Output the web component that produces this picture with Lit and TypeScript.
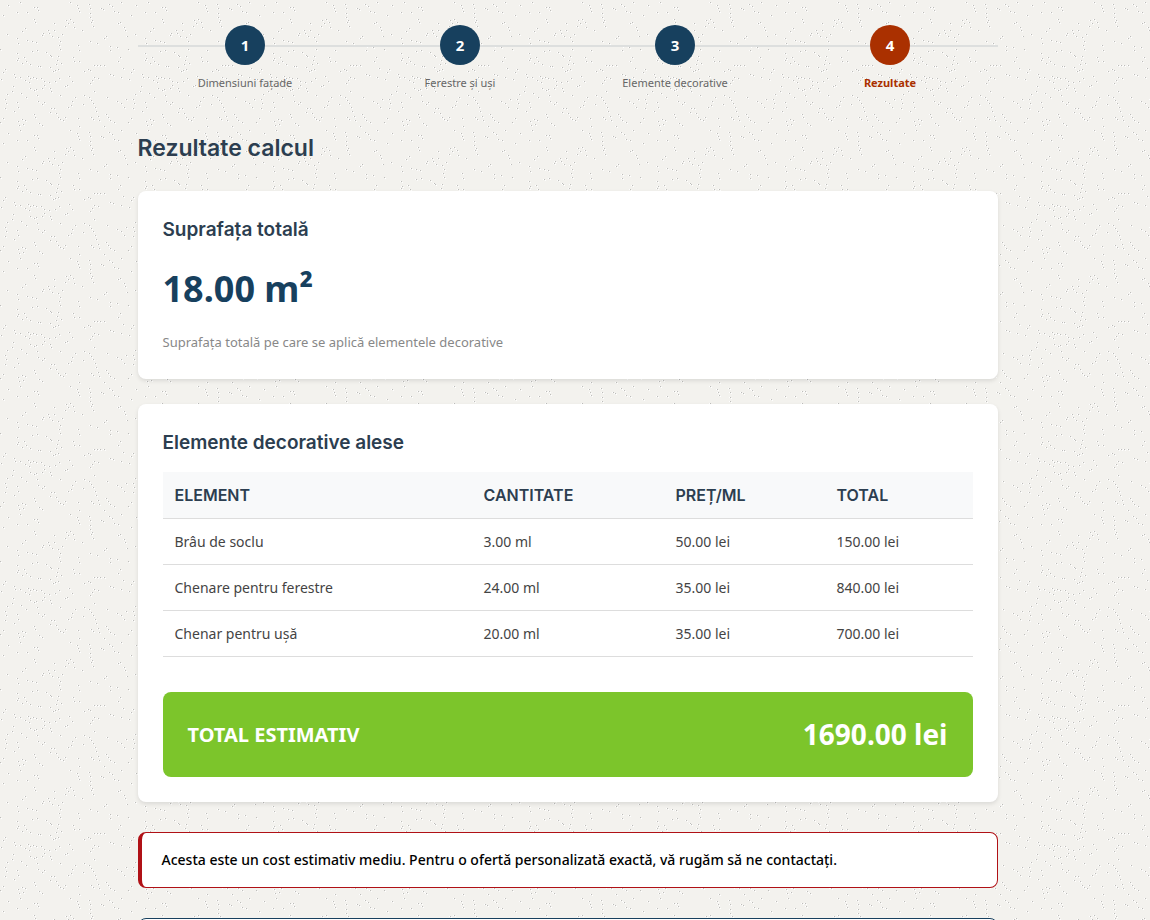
import { LitElement, html, css, unsafeCSS } from "lit";
import { customElement, property } from "lit/decorators.js";
import { classMap } from "lit/directives/class-map.js";

/* Speckles of one 128px paper tile, as x,y pairs. */
const SPECKLES =
  "20,2 70,2 77,5 78,8 79,11 89,4 90,8 101,8 103,9 109,4 112,6 114,11 118,12 121,2 34,7 37,7 38,10 27,12 17,12 8,5 3,15 90,13 90,17 91,22 93,26 92,20 " +
  "34,19 35,22 66,20 70,19 68,23 73,22 74,27 65,26 82,30 54,23 54,30 48,30 49,33 43,33 42,35 52,36 58,37 60,41 59,45 60,49 62,34 22,31 25,28 7,34 118,23 120,22 " +
  "124,27 125,30 127,36 104,38 106,36 110,46 110,50 117,47 17,38 18,43 27,40 32,51 32,41 36,42 37,50 0,49 17,53 18,58 46,52 50,55 51,56 78,45 79,50 90,41 97,43 " +
  "73,57 74,61 79,61 58,56 57,60 56,64 58,69 55,70 61,63 17,60 22,63 24,57 26,61 30,64 38,66 40,66 50,67 53,71 94,65 97,65 100,65 104,65 88,69 90,70 84,71 118,61 " +
  "123,68 120,57 5,69 3,72 14,74 15,77 20,77 25,80 28,76 30,78 33,77 36,78 41,78 44,81 29,82 30,88 34,90 36,89 42,88 44,85 49,82 50,88 51,91 55,81 59,78 69,76 72,81 " +
  "92,80 90,83 94,77 98,78 94,91 110,74 113,75 121,77 65,86 67,85 13,86 1,79 12,91 7,94 21,93 26,97 37,95 5,99 6,103 5,108 17,102 18,107 14,111 38,101 42,104 44,102 " +
  "60,95 75,97 72,101 71,105 68,107 84,95 89,97 91,100 83,104 93,103 95,107 96,111 98,116 107,97 117,101 121,103 124,107 126,99 51,108 54,108 56,113 58,117 60,119 63,120 " +
  "65,117 50,112 34,114 35,117 25,120 22,119 18,121 19,125 23,124 42,125 78,118 79,126 91,117 93,119 106,114 108,117 110,120 114,122 3,118 0,122 39,123 99,120 104,126";

const speckleTile = () => {
  const dots = SPECKLES.split(" ").map((p) => p.split(",").map(Number));
  const squares = (dx: number, dy: number) =>
    dots.map(([x, y]) => `M${x + dx} ${y + dy}h1v1h-1z`).join("");
  const svg =
    `<svg xmlns='http://www.w3.org/2000/svg' width='128' height='128' shape-rendering='crispEdges'>` +
    `<path fill='#ffffff' d='${squares(1, 1)}${squares(-1, 0)}'/>` +
    `<path fill='#bdbdbb' d='${squares(0, 0)}'/></svg>`;
  return `url("data:image/svg+xml,${encodeURIComponent(svg).replace(/'/g, "%27")}")`;
};

@customElement("step-list")
class StepList extends LitElement {
  @property({ type: Array }) steps: string[] = [];
  @property({ type: Number }) current = 0;

  static styles = css`
    :host {
      display: block;
    }
    .steps {
      display: grid;
      grid-auto-flow: column;
      grid-auto-columns: 1fr;
      margin: 0;
      padding: 0;
      list-style: none;
      background: linear-gradient(#dddfde, #dddfde) 0 20px / 100% 2px no-repeat;
    }
    .step {
      display: flex;
      flex-direction: column;
      align-items: center;
      gap: 8px;
      color: #666;
      font-size: 11px;
      line-height: 20px;
    }
    .number {
      display: grid;
      place-items: center;
      width: 40px;
      height: 40px;
      border-radius: 50%;
      background: #17405e;
      color: #fff;
      font-size: 15px;
      font-weight: 700;
    }
    .active {
      color: #aa3000;
      font-weight: 700;
    }
    .active .number {
      background: #aa3000;
    }
  `;

  render() {
    return html`<ol class="steps">
      ${this.steps.map(
        (label, i) => html`<li class=${classMap({ step: true, active: i === this.current })}>
          <span class="number">${i + 1}</span><span>${label}</span>
        </li>`
      )}
    </ol>`;
  }
}

@customElement("app-root")
class AppRoot extends LitElement {
  static styles = css`
    :host {
      display: block;
      box-sizing: border-box;
      height: 100vh;
      overflow-y: auto;
      scrollbar-width: none;
      padding-right: 15px;
      background: #f3f2ee ${unsafeCSS(speckleTile())};
      color: #444;
      font-family: "Noto Sans", "Open Sans", sans-serif;
      font-size: 14px;
      line-height: 22px;
    }
    .page {
      box-sizing: border-box;
      max-width: 900px;
      margin: 0 auto;
      padding: 25px 20px;
    }
    h2,
    h3,
    th {
      color: #2c3e50;
      font-family: Inter, "Liberation Sans", sans-serif;
      font-weight: 600;
    }
    h2 {
      margin: 40px 0 28px;
      font-size: 23px;
      line-height: 30px;
    }
    h3 {
      margin: 0;
      font-size: 19px;
      line-height: 28px;
    }
    .card {
      margin-bottom: 25px;
      padding: 25px;
      border-radius: 8px;
      background: #fff;
      box-shadow: 0 2px 4px rgba(0, 0, 0, 0.1);
    }
    .area {
      margin: 16px 0 12px;
      color: #17405e;
      font-size: 36px;
      font-weight: 700;
      line-height: 58px;
    }
    .hint {
      margin: 0;
      color: #888;
      font-size: 13px;
      line-height: 24px;
    }
    table {
      width: 100%;
      margin: 15px 0 35px;
      border-collapse: separate;
      border-spacing: 0;
      table-layout: fixed;
    }
    .col-element {
      width: 309px;
    }
    .col-quantity {
      width: 192px;
    }
    .col-price {
      width: 161px;
    }
    .col-total {
      width: 148px;
    }
    th,
    td {
      padding: 12px;
      border-bottom: 1px solid #ddd;
      line-height: 21px;
      text-align: left;
    }
    th {
      background: #f8f9fa;
      font-size: 16px;
      line-height: 22px;
      text-transform: uppercase;
    }
    .total {
      display: flex;
      align-items: center;
      justify-content: space-between;
      padding: 20px 25px;
      border-radius: 8px;
      background: #7cc52b;
      color: #fff;
      font-weight: 700;
      line-height: 45px;
    }
    .total-label {
      font-size: 20px;
    }
    .total-value {
      font-size: 28px;
    }
    .notice {
      margin: 30px 0;
      padding: 16px 20px;
      border: 1px solid #b01116;
      border-left-width: 4px;
      border-radius: 8px;
      background: #fff;
      color: #000;
      font-weight: 500;
    }
    .offer {
      min-height: 60px;
      border: 1px solid #17405e;
      border-radius: 8px;
      background: #fff;
    }
  `;

  steps = ["Dimensiuni fațade", "Ferestre și uși", "Elemente decorative", "Rezultate"];

  rows = [
    ["Brâu de soclu", "3.00 ml", "50.00 lei", "150.00 lei"],
    ["Chenare pentru ferestre", "24.00 ml", "35.00 lei", "840.00 lei"],
    ["Chenar pentru ușă", "20.00 ml", "35.00 lei", "700.00 lei"],
  ];

  render() {
    return html`<main class="page">
      <step-list .steps=${this.steps} .current=${3}></step-list>
      <h2>Rezultate calcul</h2>
      <section class="card">
        <h3>Suprafața totală</h3>
        <p class="area">18.00 m²</p>
        <p class="hint">Suprafața totală pe care se aplică elementele decorative</p>
      </section>
      <section class="card">
        <h3>Elemente decorative alese</h3>
        <table>
          <colgroup>
            <col class="col-element" />
            <col class="col-quantity" />
            <col class="col-price" />
            <col class="col-total" />
          </colgroup>
          <thead>
            <tr>
              <th scope="col">Element</th>
              <th scope="col">Cantitate</th>
              <th scope="col">Preț/ml</th>
              <th scope="col">Total</th>
            </tr>
          </thead>
          <tbody>
            ${this.rows.map((row) => html`<tr>${row.map((cell) => html`<td>${cell}</td>`)}</tr>`)}
          </tbody>
        </table>
        <div class="total">
          <span class="total-label">TOTAL ESTIMATIV</span>
          <span class="total-value">1690.00 lei</span>
        </div>
      </section>
      <p class="notice">
        Acesta este un cost estimativ mediu. Pentru o ofertă personalizată exactă, vă rugăm să ne
        contactați.
      </p>
      <section class="offer"></section>
    </main>`;
  }
}
